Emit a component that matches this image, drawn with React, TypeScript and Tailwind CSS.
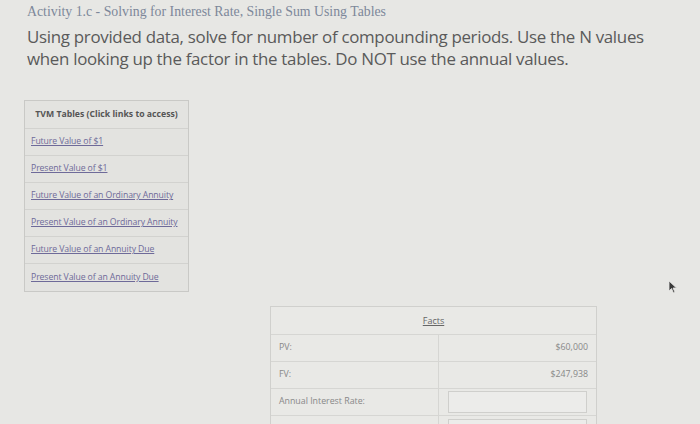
import React from 'react';

const tvmLinks = [
  'Future Value of $1',
  'Present Value of $1',
  'Future Value of an Ordinary Annuity',
  'Present Value of an Ordinary Annuity',
  'Future Value of an Annuity Due',
  'Present Value of an Annuity Due',
];

const facts = [
  { label: 'PV:', value: '$60,000' },
  { label: 'FV:', value: '$247,938' },
];

const App: React.FC = () => {
  return (
    <div className="relative w-[700px] h-[424px] overflow-hidden bg-[#e7e7e4] text-[#555]">
      <div className="pl-[27px] pt-[3px]">
        <h1 className="text-[13.8px] leading-[18px] text-[#7d879a]" style={{ fontFamily: '"Liberation Serif", serif' }}>
          Activity 1.c - Solving for Interest Rate, Single Sum Using Tables
        </h1>
        <p
          className="mt-[5px] w-[660px] text-[16.9px] leading-[22px] text-[#5a5a5a] tracking-[-0.3px]"
          style={{ fontFamily: '"Open Sans", sans-serif' }}
        >
          Using provided data, solve for number of compounding periods. Use the N values when looking up the factor in the tables. Do NOT use the annual values.
        </p>
      </div>

      <div className="ml-[24px] mt-[30px] w-[165px] border border-[#c9c9c6] bg-[#e3e3e0]" style={{ fontFamily: '"Open Sans", sans-serif' }}>
        <div className="h-[28px] flex items-center justify-center border-b border-[#d2d2cf] text-[8.7px] font-bold text-[#555]">
          TVM Tables (Click links to access)
        </div>
        {tvmLinks.map((t, i) => (
          <div
            key={t}
            className={`h-[27px] flex items-center px-[6px] whitespace-nowrap text-[8.7px] tracking-[-0.1px] text-[#6e6a99] ${i < tvmLinks.length - 1 ? 'border-b border-[#d2d2cf]' : ''}`}
          >
            <span className="underline">{t}</span>
          </div>
        ))}
      </div>

      <div className="ml-[270px] mt-[14px] w-[327px] border border-[#d0d0cd] bg-[#e9e9e6]" style={{ fontFamily: '"Open Sans", sans-serif' }}>
        <div className="h-[28px] flex items-center justify-center border-b border-[#d6d6d3] text-[9px] text-[#666]">
          <span className="underline">Facts</span>
        </div>
        {facts.map((f) => (
          <div key={f.label} className="h-[27px] flex border-b border-[#d6d6d3] text-[8.8px] text-[#888]">
            <div className="w-[168px] flex items-center px-[8px] border-r border-[#d6d6d3]">{f.label}</div>
            <div className="flex-1 flex items-center justify-end px-[8px]">{f.value}</div>
          </div>
        ))}
        <div className="h-[27px] flex border-b border-[#d6d6d3] text-[8.8px] text-[#888]">
          <div className="w-[168px] flex items-center px-[8px] border-r border-[#d6d6d3]">Annual Interest Rate:</div>
          <div className="flex-1 flex items-center px-[9px]">
            <div className="h-[22px] w-full border border-[#cfcfcc] bg-[#ececea]" />
          </div>
        </div>
        <div className="h-[27px] flex text-[8.8px] text-[#888]">
          <div className="w-[168px] flex items-center px-[8px] border-r border-[#d6d6d3]" />
          <div className="flex-1 flex items-center px-[9px]">
            <div className="h-[22px] w-full border border-[#cfcfcc] bg-[#ececea]" />
          </div>
        </div>
      </div>

      <svg className="absolute left-[668px] top-[280px]" width="10" height="14" viewBox="0 0 10 14">
        <path d="M1 1 L1 11 L3.5 8.5 L5.5 13 L7 12.3 L5 8 L8.5 8 Z" fill="#3a3a3a" stroke="#e7e7e4" strokeWidth="0.8" />
      </svg>
    </div>
  );
};

export default App;
